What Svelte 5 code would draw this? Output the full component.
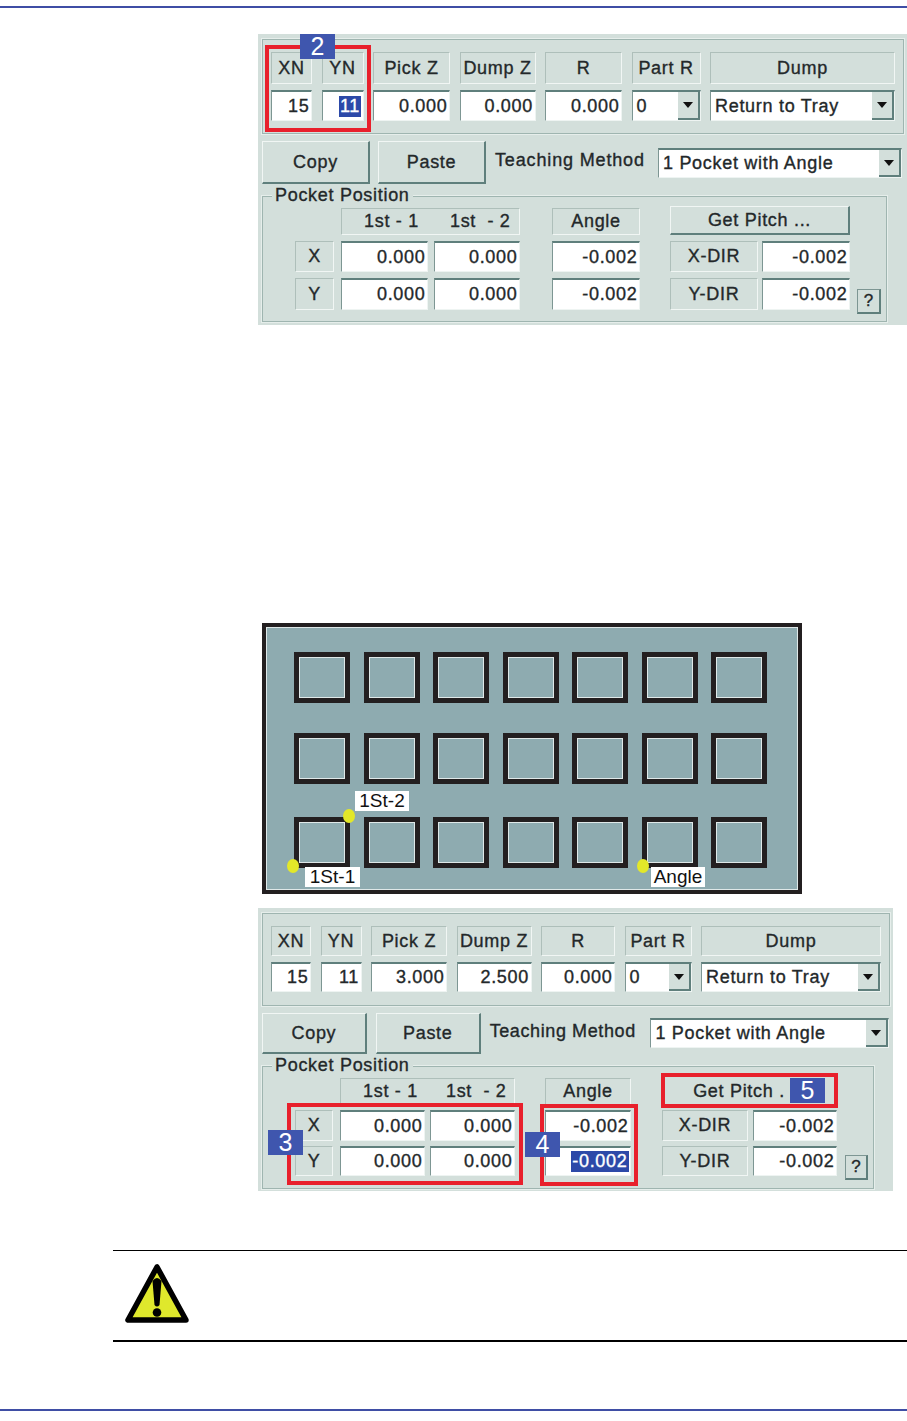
<script>
  // Two captures of the tray teaching dialog, a pocket diagram and a caution note.
  const first = {
    cls: 'first',
    xn: '15', yn: '11', pick: '0.000', dump: '0.000', r: '0.000',
    angleX: '-0.002', angleY: '-0.002', getPitch: 'Get Pitch ...',
    ynSelected: true, angleSelected: false,
    boxes: [{ x: 7, y: 11, w: 106, h: 87 }],
    badges: [{ n: 2, x: 42, y: 0 }]
  };
  const second = {
    cls: 'second',
    xn: '15', yn: '11', pick: '3.000', dump: '2.500', r: '0.000',
    angleX: '-0.002', angleY: '-0.002', getPitch: 'Get Pitch .',
    ynSelected: false, angleSelected: true,
    boxes: [
      { x: 29, y: 195, w: 236, h: 82 },
      { x: 282, y: 196, w: 98, h: 82 },
      { x: 403, y: 165, w: 177, h: 35 }
    ],
    badges: [
      { n: 3, x: 10, y: 222 },
      { n: 4, x: 267, y: 224 },
      { n: 5, x: 532, y: 170 }
    ]
  };
  const pocketRows = [0, 1, 2];
  const pockets = [0, 1, 2, 3, 4, 5, 6];
</script>

{#snippet dialog(d)}
  <section class="dialog {d.cls}">
    <div class="params">
      <div class="cap">XN</div>
      <div class="cap">YN</div>
      <div class="cap">Pick Z</div>
      <div class="cap">Dump Z</div>
      <div class="cap">R</div>
      <div class="cap">Part R</div>
      <div class="cap">Dump</div>
      <div class="field">{d.xn}</div>
      <div class="field">{#if d.ynSelected}<span class="sel">{d.yn}</span>{:else}{d.yn}{/if}</div>
      <div class="field">{d.pick}</div>
      <div class="field">{d.dump}</div>
      <div class="field">{d.r}</div>
      <div class="combo"><span>0</span><i class="arrow"></i></div>
      <div class="combo"><span>Return to Tray</span><i class="arrow"></i></div>
    </div>

    <div class="actions">
      <div class="btn">Copy</div>
      <div class="btn">Paste</div>
      <div class="method">Teaching Method</div>
      <div class="combo wide"><span>1 Pocket with Angle</span><i class="arrow"></i></div>
    </div>

    <div class="pocket">
      <div class="legend">Pocket Position</div>
      <div class="pocket-grid">
        <div class="cap firsts"><span>1st - 1</span><span>1st&nbsp; - 2</span></div>
        <div class="cap angle-cap">Angle</div>
        <div class="btn pitch">{d.getPitch}</div>

        <div class="cap axis">X</div>
        <div class="field c1">0.000</div>
        <div class="field c2">0.000</div>
        <div class="field c3">{d.angleX}</div>
        <div class="cap dir">X-DIR</div>
        <div class="field c5">-0.002</div>

        <div class="cap axis">Y</div>
        <div class="field c1">0.000</div>
        <div class="field c2">0.000</div>
        <div class="field c3">{#if d.angleSelected}<span class="sel">{d.angleY}</span>{:else}{d.angleY}{/if}</div>
        <div class="cap dir">Y-DIR</div>
        <div class="field c5">-0.002</div>
        <div class="help">?</div>
      </div>
    </div>

    {#each d.boxes as b}
      <div class="redbox" style="left:{b.x}px;top:{b.y}px;width:{b.w}px;height:{b.h}px"></div>
    {/each}
    {#each d.badges as b}
      <div class="badge" style="left:{b.x}px;top:{b.y}px">{b.n}</div>
    {/each}
  </section>
{/snippet}

<div class="page">
  <div class="rule-top"></div>

  {@render dialog(first)}

  <section class="tray">
    {#each pocketRows as r}
      <div class="tray-row">
        {#each pockets as p}
          <div class="slot"></div>
        {/each}
      </div>
    {/each}
    <div class="tag t2">1St-2</div>
    <div class="tag t1">1St-1</div>
    <div class="tag t3">Angle</div>
    <i class="dot d2"></i>
    <i class="dot d1"></i>
    <i class="dot d3"></i>
  </section>

  {@render dialog(second)}

  <section class="caution">
    <svg width="70" height="62" viewBox="0 0 70 62">
      <path d="M35 4 L6 57 H64 Z" fill="#dfe82c" stroke="#000" stroke-width="5.5" stroke-linejoin="round" />
      <path d="M30.5 18 Q35 12 39.5 18 L37.5 42 Q35 45 32.5 42 Z" fill="#000" />
      <circle cx="35" cy="49.5" r="4.3" fill="#000" />
    </svg>
  </section>

  <div class="rule-bottom"></div>
</div>

<style>
  :global(body) {
    margin: 0;
    background: #fff;
  }
  .page {
    width: 907px;
    height: 1421px;
    overflow: hidden;
    font-family: "Liberation Sans", Arial, sans-serif;
    color: #23282a;
  }
  .rule-top {
    height: 2px;
    margin-top: 6px;
    background: #3f4ea5;
  }

  /* dialog */
  .dialog {
    position: relative;
    box-sizing: border-box;
    margin-left: 258px;
    background: #d3dfdb;
    font-size: 18px;
    letter-spacing: 0.7px;
    -webkit-text-stroke: 0.35px #23282a;
    padding: 5px 4px 0;
  }
  .dialog.first {
    margin-top: 26px;
    width: 649px;
    height: 291px;
  }
  .dialog.second {
    margin-top: 14px;
    width: 635px;
    height: 283px;
  }
  .params {
    box-sizing: border-box;
    display: grid;
    column-gap: 9.5px;
    row-gap: 6px;
    border: 1px solid #9fb5b0;
    box-shadow: 0 0 0 1px #e6eeeb;
  }
  .first .params {
    width: 642px;
    height: 95px;
    padding: 12px 0 0 8px;
    grid-template-columns: 41px 42px 77px 76px 77px 69px 185px;
    grid-template-rows: 32px 31px;
  }
  .second .params {
    width: 628px;
    height: 93px;
    padding: 12px 0 0 8px;
    grid-template-columns: 40px 41px 76px 75px 74px 67px 180px;
    grid-template-rows: 30px 30px;
  }
  .cap {
    display: flex;
    align-items: center;
    justify-content: center;
    box-sizing: border-box;
    border: 1px solid;
    border-color: #aebfba #f1f6f4 #f1f6f4 #aebfba;
    white-space: nowrap;
  }
  .field {
    display: flex;
    align-items: center;
    justify-content: flex-end;
    box-sizing: border-box;
    background: #fff;
    border-style: solid;
    border-width: 2px 1px 1px 1px;
    border-color: #5f7f7c #eef4f2 #eef4f2 #7d9693;
    padding-right: 1.5px;
    white-space: nowrap;
  }
  .sel {
    background: #2c49a8;
    color: #fff;
    -webkit-text-stroke: 0.35px #fff;
    padding: 0 1px;
  }
  .combo {
    display: flex;
    align-items: center;
    justify-content: space-between;
    box-sizing: border-box;
    background: #fff;
    border-style: solid;
    border-width: 2px 1px 1px 1px;
    border-color: #5f7f7c #eef4f2 #eef4f2 #7d9693;
    padding: 0 0 0 4px;
    white-space: nowrap;
  }
  .arrow {
    position: relative;
    flex: none;
    align-self: stretch;
    width: 20px;
    background: #d3dfdb;
    border-right: 2px solid #5f7f7c;
    border-bottom: 2px solid #5f7f7c;
  }
  .arrow::after {
    content: "";
    position: absolute;
    left: 5px;
    top: 10px;
    border: 5px solid transparent;
    border-top: 6px solid #111;
    border-bottom: 0;
  }
  .actions {
    display: flex;
    align-items: flex-start;
  }
  .first .actions {
    margin-top: 7px;
    height: 43px;
  }
  .second .actions {
    margin-top: 7px;
    height: 41px;
  }
  .btn {
    display: flex;
    align-items: center;
    justify-content: center;
    box-sizing: border-box;
    border-style: solid;
    border-width: 1px 2px 2px 1px;
    border-color: #f1f6f4 #5f7f7c #5f7f7c #f1f6f4;
    white-space: nowrap;
  }
  .actions .btn {
    height: 100%;
    margin-right: 8px;
  }
  .first .actions .btn {
    width: 108px;
  }
  .second .actions .btn {
    width: 105px;
    margin-right: 9px;
  }
  .method {
    letter-spacing: 0.85px;
    white-space: nowrap;
    margin-left: 1px;
  }
  .first .method {
    width: 163px;
    margin-top: 9px;
  }
  .second .method {
    width: 160px;
    margin-top: 8px;
    margin-left: 0;
    letter-spacing: 0.6px;
  }
  .combo.wide {
    height: 30px;
    margin-top: 7px;
  }
  .first .wide {
    width: 244px;
  }
  .second .wide {
    width: 239px;
    margin-top: 5px;
    margin-left: 1px;
  }

  /* pocket position group */
  .pocket {
    position: relative;
    box-sizing: border-box;
    border: 1px solid #9fb5b0;
    box-shadow: 0 0 0 1px #e6eeeb;
  }
  .first .pocket {
    width: 625px;
    height: 126px;
    margin-top: 12px;
    padding: 11px 0 0 32px;
  }
  .second .pocket {
    width: 612px;
    height: 123px;
    margin-top: 12px;
    padding: 11px 0 0 32px;
  }
  .legend {
    position: absolute;
    left: 9px;
    top: -12px;
    padding: 0 3px;
    background: #d3dfdb;
    white-space: nowrap;
  }
  .pocket-grid {
    display: grid;
  }
  .first .pocket-grid {
    grid-template-columns: 39px 7px 87px 6px 86px 32px 88px 30px 88px 4px 88px 7px 24px;
    grid-template-rows: 27px 31px 32px;
    row-gap: 6px;
  }
  .second .pocket-grid {
    grid-template-columns: 38px 7px 85px 5px 85px 30px 86px 31px 86px 5px 84px 8px 23px;
    grid-template-rows: 27px 31px 30px;
    row-gap: 5px;
  }
  .firsts {
    grid-column: 3 / 6;
    justify-content: flex-start;
    gap: 31px;
    padding-left: 22px;
  }
  .second .firsts {
    gap: 28px;
  }
  .angle-cap {
    grid-column: 7;
  }
  .pitch {
    grid-column: 9 / 12;
  }
  .first .pitch {
    margin: -2px 0 0;
  }
  .second .pitch {
    border-color: transparent;
    padding-right: 20px;
    justify-content: center;
  }
  .axis {
    grid-column: 1;
  }
  .c1 { grid-column: 3; }
  .c2 { grid-column: 5; }
  .c3 { grid-column: 7; }
  .dir { grid-column: 9; }
  .c5 { grid-column: 11; }
  .help {
    grid-column: 13;
    display: flex;
    align-items: center;
    justify-content: center;
    height: 25px;
    align-self: end;
    margin-bottom: -4px;
    box-sizing: border-box;
    border-style: solid;
    border-width: 1px 2px 2px 1px;
    border-color: #7d9693 #5f7f7c #5f7f7c #7d9693;
    font-size: 17px;
    letter-spacing: 0;
  }

  /* overlays from the manual */
  .redbox {
    position: absolute;
    box-sizing: border-box;
    border: 4px solid #e8202c;
  }
  .badge {
    position: absolute;
    width: 35px;
    height: 25px;
    display: flex;
    align-items: center;
    justify-content: center;
    background: #3f56ae;
    color: #fff;
    -webkit-text-stroke: 0;
    font-size: 25px;
    letter-spacing: 0;
  }

  /* pocket diagram */
  .tray {
    position: relative;
    box-sizing: border-box;
    width: 540px;
    height: 271px;
    margin: 298px 0 0 262px;
    padding: 25px 0 0 28px;
    background: #8eabb0;
    border: 4px solid #231f20;
    box-shadow: inset 0 0 0 1px #dfe8e8;
  }
  .tray-row {
    display: grid;
    grid-template-columns: repeat(7, 56px);
    column-gap: 13.5px;
    margin-bottom: 30px;
  }
  .tray-row:nth-child(2) {
    margin-bottom: 33px;
  }
  .slot {
    box-sizing: border-box;
    height: 51px;
    border: 5px solid #231f20;
    outline: 1px solid #dfe8e8;
    outline-offset: -6px;
  }
  .tag {
    position: absolute;
    background: #fff;
    color: #111;
    font-size: 19px;
    line-height: 20px;
    text-align: center;
  }
  .t2 { left: 89px; top: 164px; width: 54px; }
  .t1 { left: 39px; top: 240px; width: 55px; }
  .t3 { left: 385px; top: 240px; width: 54px; }
  .dot {
    position: absolute;
    width: 12px;
    height: 14px;
    border-radius: 50%;
    background: #e3e829;
  }
  .d2 { left: 77px; top: 182px; }
  .d1 { left: 21px; top: 232px; }
  .d3 { left: 371px; top: 232px; }

  /* caution note */
  .caution {
    box-sizing: border-box;
    height: 92px;
    margin: 59px 0 0 113px;
    padding: 12px 0 0 9px;
    border-top: 1px solid #000;
    border-bottom: 2px solid #000;
  }
  .caution svg {
    display: block;
  }
  .rule-bottom {
    height: 2px;
    margin-top: 67px;
    background: #3f4ea5;
  }
</style>
